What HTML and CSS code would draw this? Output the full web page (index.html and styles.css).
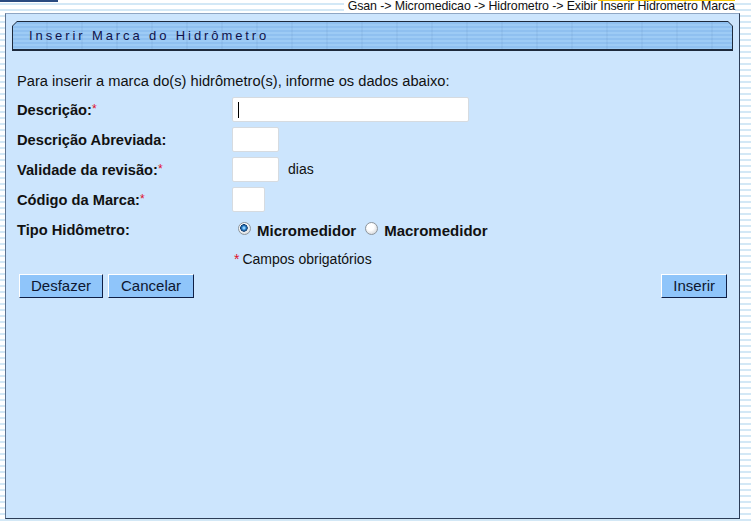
FILE: index.html
```html
<!DOCTYPE html>
<html lang="pt-BR">
<head>
<meta charset="utf-8">
<title>Inserir Marca do Hidrômetro</title>
<link rel="stylesheet" href="styles.css">
</head>
<body>
<div class="top">
  <div class="brandline"></div>
  <div class="crumb">Gsan -&gt; Micromedicao -&gt; Hidrometro -&gt; Exibir Inserir Hidrometro Marca</div>
</div>
<div class="panel">
  <div class="titlebar"><div class="titlefill">Inserir Marca do Hidrômetro</div></div>
  <p class="intro">Para inserir a marca do(s) hidrômetro(s), informe os dados abaixo:</p>
  <div class="form">
    <label class="lbl">Descrição:<span class="req">*</span></label>
    <div class="fld"><input class="inp w-desc caret" type="text"></div>
    <label class="lbl">Descrição Abreviada:</label>
    <div class="fld"><input class="inp w-med" type="text"></div>
    <label class="lbl">Validade da revisão:<span class="req">*</span></label>
    <div class="fld"><input class="inp w-med" type="text"><span class="unit">dias</span></div>
    <label class="lbl">Código da Marca:<span class="req">*</span></label>
    <div class="fld"><input class="inp w-sm" type="text"></div>
    <label class="lbl">Tipo Hidômetro:</label>
    <div class="fld radios">
      <label class="opt"><input class="rad" type="radio" name="tipo" checked><span>Micromedidor</span></label>
      <label class="opt"><input class="rad" type="radio" name="tipo"><span>Macromedidor</span></label>
    </div>
    <div></div>
    <div class="fld note"><span class="req">*</span> Campos obrigatórios</div>
  </div>
  <div class="actions">
    <div class="group">
      <button class="btn" type="button">Desfazer</button>
      <button class="btn btn-wide" type="button">Cancelar</button>
    </div>
    <button class="btn" type="button">Inserir</button>
  </div>
</div>
</body>
</html>
```
FILE: styles.css
```css
html, body {
  margin: 0;
  padding: 0;
}
body {
  width: 751px;
  height: 524px;
  overflow: hidden;
  font-family: "Liberation Sans", Arial, sans-serif;
  background: repeating-linear-gradient(to bottom, #ffffff 0 3px, #d3e8f6 3px 5px, #ffffff 5px 6px);
}
.top {
  height: 13px;
  display: flex;
  justify-content: space-between;
  align-items: flex-start;
}
.brandline {
  width: 58px;
  height: 2px;
  background: #2a4a80;
}
.crumb {
  margin-right: 16px;
  padding-top: 1px;
  font-size: 12.4px;
  line-height: 11px;
  color: #111;
  white-space: nowrap;
  letter-spacing: -0.1px;
  background:
    linear-gradient(#f5c400, #f5c400) no-repeat right 0 top 0 / 137px 1px,
    #ffffff;
  padding-left: 4px;
}
.panel {
  margin-left: 5px;
  width: 735px;
  height: 506px;
  box-sizing: border-box;
  background: #cce5fd;
  border: 1px solid #2c3d57;
  border-top-color: #8ea6c4;
  border-left-color: #5e7390;
}
.titlebar {
  margin: 7px 6px 0 6px;
  height: 30px;
  box-sizing: border-box;
  padding: 1px 1px 2px 1px;
  background: #1d2a3c;
  clip-path: polygon(5px 0, calc(100% - 5px) 0, 100% 5px, 100% 100%, 0 100%, 0 5px);
}
.titlefill {
  height: 100%;
  box-sizing: border-box;
  clip-path: polygon(4px 0, calc(100% - 4px) 0, 100% 4px, 100% 100%, 0 100%, 0 4px);
  background:
    repeating-linear-gradient(to right, rgba(255,255,255,0) 0 33px, rgba(60,100,150,0.07) 33px 35px),
    repeating-linear-gradient(to bottom, #8fc0f0 0 2px, #9dcbf5 2px 4px);
  padding-left: 16px;
  font-size: 13px;
  line-height: 27px;
  letter-spacing: 2.9px;
  color: #10124a;
}
.intro {
  margin: 22px 0 0 11px;
  font-size: 11pt;
  line-height: 17px;
  color: #111;
}
.form {
  margin: 4px 0 0 11px;
  display: grid;
  grid-template-columns: 215px 1fr;
  grid-auto-rows: 30px;
  align-items: center;
}
.lbl {
  padding-top: 2px;
  font-size: 11pt;
  font-weight: bold;
  color: #111;
}
.req {
  color: #e0102a;
  font-weight: normal;
}
.lbl .req {
  font-size: 12px;
  vertical-align: 2px;
}
.fld {
  display: flex;
  align-items: center;
}
.inp {
  height: 25px;
  box-sizing: border-box;
  border: 1px solid #d6dbe0;
  border-radius: 2px;
  background: #fff;
  margin: 0;
  padding: 0 4px;
  font-family: inherit;
  font-size: 13px;
}
.caret {
  background: linear-gradient(to right, transparent 5px, #000 5px 6px, transparent 6px) no-repeat 0 4px / 100% 16px, #fff;
}
.w-desc { width: 237px; }
.w-med { width: 47px; }
.w-sm { width: 33px; }
.unit {
  margin-left: 9px;
  font-size: 14px;
  color: #111;
}
.radios {
  padding-left: 6px;
  padding-top: 2px;
  gap: 9px;
}
.opt {
  display: flex;
  align-items: center;
  gap: 6px;
  font-size: 15px;
  font-weight: bold;
  color: #111;
}
.rad {
  appearance: none;
  -webkit-appearance: none;
  margin: 0 0 3px 0;
  width: 13px;
  height: 13px;
  border-radius: 50%;
  border: 1px solid #8d959c;
  background: radial-gradient(circle at 40% 35%, #ffffff 0 35%, #d6d9dc 80%);
  box-sizing: border-box;
}
.rad:checked {
  background:
    radial-gradient(circle at 45% 45%, #8fd0ff 0 1px, #2a7fc8 2px, #153f70 3.5px, transparent 4px),
    radial-gradient(circle at 40% 35%, #ffffff 0 35%, #d6d9dc 80%);
}
.note {
  font-size: 14px;
  color: #111;
  padding-left: 2px;
}
.note .req { margin-right: 3px; }
.actions {
  margin: 0 12px 0 13px;
  display: flex;
  justify-content: space-between;
}
.group {
  display: flex;
  gap: 5px;
}
.btn {
  height: 24px;
  padding: 0 11px;
  box-sizing: border-box;
  background: #8fc5fa;
  border: 1px solid;
  border-color: #ffffff #0f1f45 #0f1f45 #ffffff;
  font-family: "Liberation Sans", Arial, sans-serif;
  font-size: 15px;
  color: #0d1730;
  line-height: 20px;
}
.btn-wide {
  padding: 0 12px;
}
```
